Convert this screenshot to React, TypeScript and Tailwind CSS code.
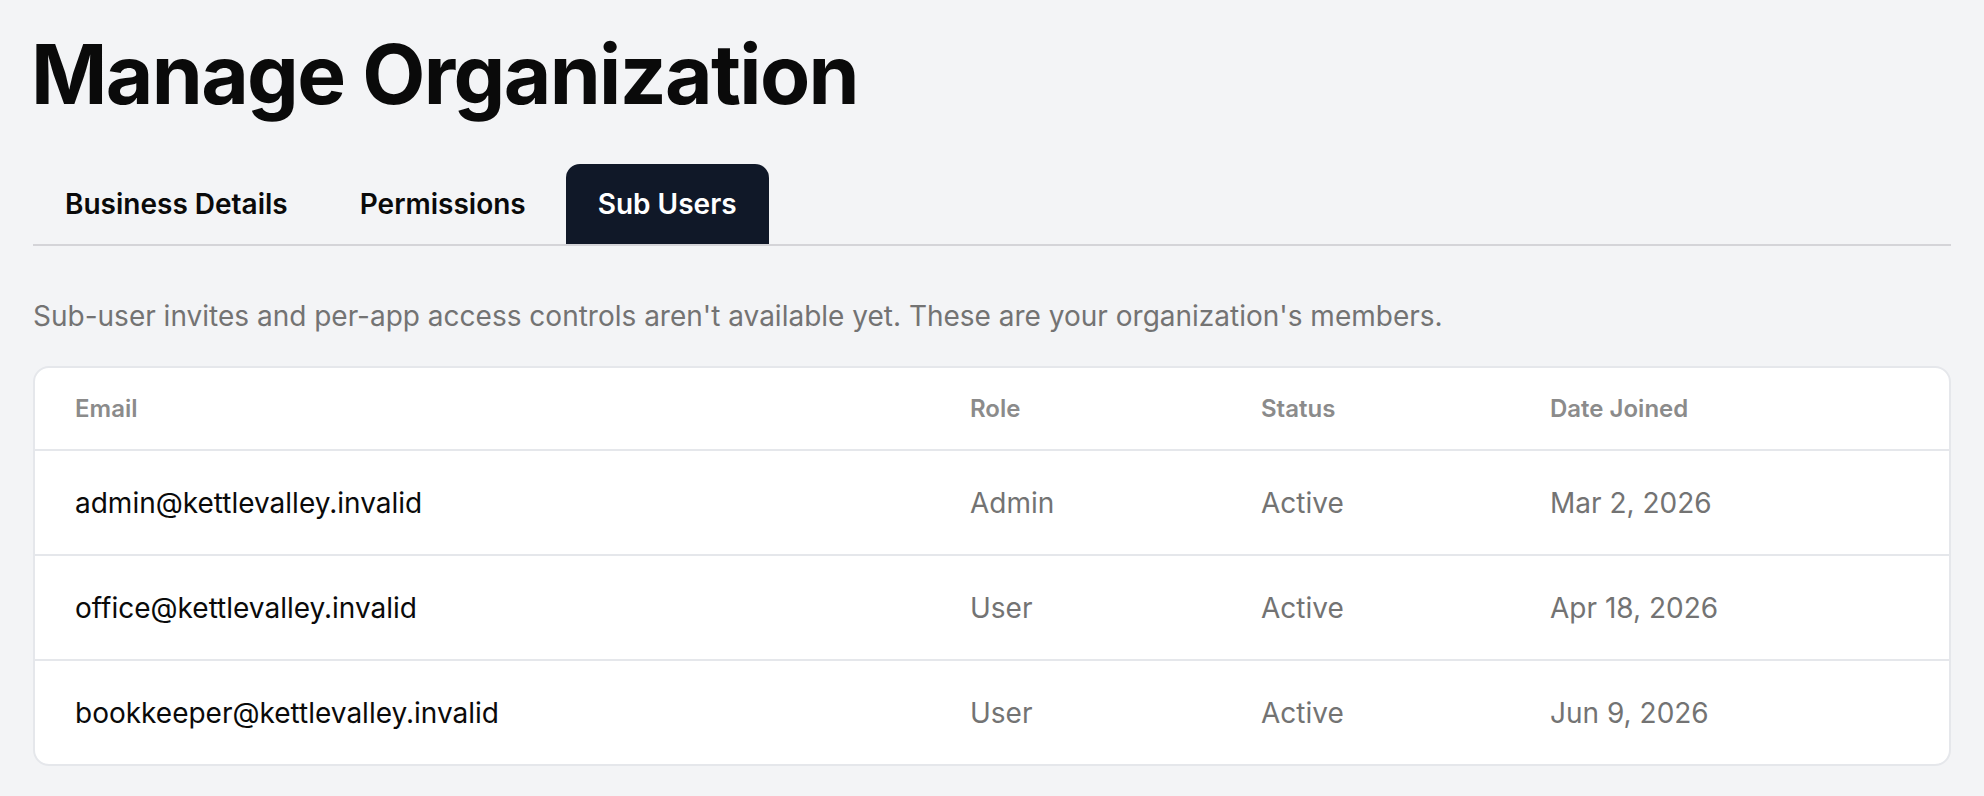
import { useState } from 'react'

const tabs = ['Business Details', 'Permissions', 'Sub Users']

const members = [
  { email: 'admin@kettlevalley.invalid', role: 'Admin', status: 'Active', joined: 'Mar 2, 2026' },
  { email: 'office@kettlevalley.invalid', role: 'User', status: 'Active', joined: 'Apr 18, 2026' },
  { email: 'bookkeeper@kettlevalley.invalid', role: 'User', status: 'Active', joined: 'Jun 9, 2026' },
]

const cols = 'grid grid-cols-[895px_291px_289px_1fr]'

export default function App() {
  const [active, setActive] = useState('Sub Users')

  return (
    <main className="min-h-screen bg-[#f3f4f6] px-[33px] pt-[26px] pb-10 font-['Inter',sans-serif]">
      <h1 className="text-[82px] leading-[1.2] font-bold tracking-[-0.02em] text-[#0a0a0a] -ml-[2px]">
        Manage Organization
      </h1>

      {/* Tabs */}
      <div className="mt-[40px] flex gap-2 border-b-2 border-[#d4d4d8]">
        {tabs.map((tab) => (
          <button
            key={tab}
            onClick={() => setActive(tab)}
            className={`h-[80px] px-8 rounded-t-[14px] text-[28px] font-semibold ${
              tab === active ? 'bg-[#101828] text-white' : 'text-[#0a0a0a]'
            }`}
          >
            {tab}
          </button>
        ))}
      </div>

      <p className="mt-[49px] text-[28px] text-[#737373]">
        Sub-user invites and per-app access controls aren't available yet. These are your organization's members.
      </p>

      {/* Members table */}
      <div className="mt-[29px] bg-white border-2 border-[#e5e7eb] rounded-[16px] overflow-hidden">
        <div className={`${cols} h-[81px] items-center px-[40px] text-[24px] font-semibold text-[#8b8b8b]`}>
          <div>Email</div>
          <div>Role</div>
          <div>Status</div>
          <div>Date Joined</div>
        </div>
        {members.map((m) => (
          <div
            key={m.email}
            className={`${cols} h-[105px] items-center px-[40px] border-t-2 border-[#e5e7eb] text-[28px]`}
          >
            <div className="text-[#0a0a0a]">{m.email}</div>
            <div className="text-[#737373]">{m.role}</div>
            <div className="text-[#737373]">{m.status}</div>
            <div className="text-[#737373]">{m.joined}</div>
          </div>
        ))}
      </div>
    </main>
  )
}
